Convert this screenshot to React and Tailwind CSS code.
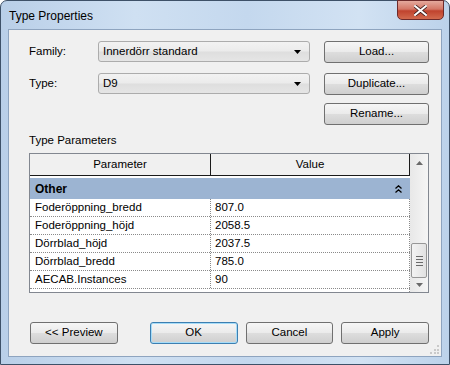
import React from "react";

const font = { fontFamily: '"Liberation Sans", Arial, sans-serif' };

function WinButton({ children, className = "", primary = false }) {
  return (
    <div
      className={
        "h-[22px] flex items-center justify-center rounded-[3px] border text-[11.5px] text-black bg-[linear-gradient(#f6f6f6,#ebebeb_48%,#dddddd_52%,#cfcfcf)] " +
        (primary ? "border-[#3c7fb1] shadow-[inset_0_0_0_1px_#a6dcf8] " : "border-[#707070] ") +
        className
      }
    >
      {children}
    </div>
  );
}

function Combo({ value }) {
  return (
    <div className="w-[212px] h-[21px] rounded-[3px] border border-[#acacac] bg-[linear-gradient(#f2f2f2,#ebebeb_48%,#dedede_52%,#e5e5e5)] flex items-center pl-[4px] pr-[8px]">
      <span className="flex-1">{value}</span>
      <svg width="7" height="4" viewBox="0 0 7 4">
        <path d="M0 0h7L3.5 4z" fill="#000" />
      </svg>
    </div>
  );
}

const rows = [
  ["Foderöppning_bredd", "807.0"],
  ["Foderöppning_höjd", "2058.5"],
  ["Dörrblad_höjd", "2037.5"],
  ["Dörrblad_bredd", "785.0"],
  ["AECAB.Instances", "90"],
];

export default function App() {
  return (
    <div className="w-[450px] h-[365px] bg-white" style={font}>
      <div className="w-[450px] h-[365px] rounded-t-[7px] border border-[#3e5168] bg-[linear-gradient(90deg,#b9cfe8,#cfe0f2_30%,#c4d8ee_55%,#d2e2f3_80%,#bcd2ea)] flex flex-col">
        {/* title bar */}
        <div className="h-[28px] flex items-start relative">
          <span className="ml-[8px] mt-[6px] text-[12px] text-black">Type Properties</span>
          <div className="absolute right-[5px] top-[-1px] w-[47px] h-[20px] rounded-b-[5px] border border-[#6d2a2a] bg-[linear-gradient(#e5a99d,#d47766_45%,#c0432e_55%,#d26a4e)] flex items-center justify-center">
            <svg width="13" height="11" viewBox="0 0 13 11">
              <path d="M1 1l11 9M12 1L1 10" stroke="#3a1a1a" strokeWidth="3.6" strokeLinecap="square" />
              <path d="M1 1l11 9M12 1L1 10" stroke="#fff" strokeWidth="2" strokeLinecap="square" />
            </svg>
          </div>
        </div>

        {/* client */}
        <div className="flex-1 mx-[7px] mb-[7px] border border-[#8ea4bf] bg-[#f0f0f0] pl-[20px] pr-[12px] flex flex-col text-[11.5px] text-black relative">
          <div className="mt-[11px] flex items-center h-[21px]">
            <span className="w-[69px]">Family:</span>
            <Combo value="Innerdörr standard" />
            <WinButton className="ml-[14px] w-[105px]">Load...</WinButton>
          </div>
          <div className="mt-[11px] flex items-center h-[21px]">
            <span className="w-[69px]">Type:</span>
            <Combo value="D9" />
            <WinButton className="ml-[14px] w-[105px]">Duplicate...</WinButton>
          </div>
          <div className="mt-[9px] flex justify-end">
            <WinButton className="w-[105px]">Rename...</WinButton>
          </div>
          <div className="mt-[8px] h-[15px] leading-[15px]">Type Parameters</div>

          {/* table */}
          <div className="mt-[5px] h-[140px] border border-[#828790] flex bg-white">
            <div className="w-[380px] flex flex-col">
              <div className="h-[22px] flex bg-[#f0f0f0] border-b border-r border-[#1a1a1a]">
                <div className="w-[181px] border-r border-[#1a1a1a] flex items-center justify-center">Parameter</div>
                <div className="flex-1 flex items-center justify-center">Value</div>
              </div>
              <div className="mt-[2px] h-[21px] bg-[#9cb4d2] flex items-center pl-[5px] pr-[8px] font-bold text-[12px]">
                <span className="flex-1">Other</span>
                <svg width="7" height="8" viewBox="0 0 7 8">
                  <path d="M0.5 3.5L3.5 0.8L6.5 3.5M0.5 7.5L3.5 4.8L6.5 7.5" stroke="#000" strokeWidth="1.3" fill="none" />
                </svg>
              </div>
              {rows.map(([k, v]) => (
                <div key={k} className="h-[18px] flex border-b border-dotted border-[#8a8a8a]">
                  <div className="w-[181px] pl-[5px] border-r border-dotted border-[#8a8a8a] flex items-center">{k}</div>
                  <div className="flex-1 pl-[4px] border-r border-dotted border-[#8a8a8a] flex items-center">{v}</div>
                </div>
              ))}
              <div className="flex-1 border-r border-dotted border-[#8a8a8a]" />
            </div>
            {/* scrollbar */}
            <div className="w-[18px] bg-[linear-gradient(90deg,#e8e8e8,#f5f5f5)] flex flex-col items-center">
              <div className="h-[17px] flex items-center justify-center">
                <svg width="7" height="4" viewBox="0 0 7 4">
                  <path d="M0 4h7L3.5 0z" fill="#6a6a6a" />
                </svg>
              </div>
              <div className="mt-[72px] w-[16px] h-[35px] rounded-[2px] border border-[#979797] bg-[linear-gradient(90deg,#f3f3f3,#e2e2e2)] flex flex-col items-center justify-center gap-[2px]">
                <div className="w-[7px] h-[1px] bg-[#6a6a6a]" />
                <div className="w-[7px] h-[1px] bg-[#6a6a6a]" />
                <div className="w-[7px] h-[1px] bg-[#6a6a6a]" />
                <div className="w-[7px] h-[1px] bg-[#6a6a6a]" />
              </div>
              <div className="mt-[5px] flex items-center justify-center">
                <svg width="7" height="4" viewBox="0 0 7 4">
                  <path d="M0 0h7L3.5 4z" fill="#6a6a6a" />
                </svg>
              </div>
            </div>
          </div>

          {/* bottom buttons */}
          <div className="mt-[29px] flex">
            <WinButton className="ml-[1px] w-[88px]">&lt;&lt; Preview</WinButton>
            <WinButton primary className="ml-[32px] w-[88px]">OK</WinButton>
            <WinButton className="ml-[8px] w-[88px]">Cancel</WinButton>
            <WinButton className="ml-[8px] w-[88px]">Apply</WinButton>
          </div>
          <div className="absolute right-[1px] bottom-[1px] w-[10px] h-[10px] grid grid-cols-3 gap-[1px] opacity-60">
            <div />
            <div />
            <div className="w-[2px] h-[2px] bg-[#b0b0b0]" />
            <div />
            <div className="w-[2px] h-[2px] bg-[#b0b0b0]" />
            <div className="w-[2px] h-[2px] bg-[#b0b0b0]" />
            <div className="w-[2px] h-[2px] bg-[#b0b0b0]" />
            <div className="w-[2px] h-[2px] bg-[#b0b0b0]" />
            <div className="w-[2px] h-[2px] bg-[#b0b0b0]" />
          </div>
        </div>
      </div>
    </div>
  );
}
